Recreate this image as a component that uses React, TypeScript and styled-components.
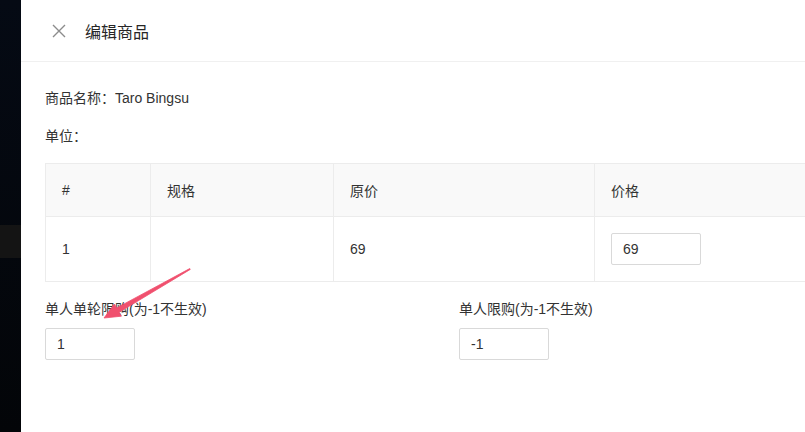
import styled, { createGlobalStyle } from "styled-components";

const GlobalStyle = createGlobalStyle`
  html, body {
    margin: 0;
    padding: 0;
    background: #ffffff;
  }
  body {
    font-family: "Liberation Sans", Arial, "Noto Sans CJK SC", sans-serif;
    color: #333;
    font-size: 14px;
  }
`;

const rows = [{ idx: "1", spec: "", original: "69", price: "69" }];

const App = () => {
  return (
    <>
      <GlobalStyle />
      <Screen>
        <Backdrop>
          <BackdropRow />
        </Backdrop>
        <Drawer>
          <Header>
            <CloseButton aria-label="close">
              <svg width="14" height="14" viewBox="0 0 14 14">
                <path d="M1 1 L13 13 M13 1 L1 13" stroke="#8c8c8c" strokeWidth="1.4" fill="none" />
              </svg>
            </CloseButton>
            <Title>编辑商品</Title>
          </Header>
          <Body>
            <InfoLine>商品名称：Taro Bingsu</InfoLine>
            <InfoLine>单位：</InfoLine>
            <Table>
              <thead>
                <tr>
                  <Th $width={105}>#</Th>
                  <Th $width={183}>规格</Th>
                  <Th $width={261}>原价</Th>
                  <Th>价格</Th>
                </tr>
              </thead>
              <tbody>
                {rows.map((r) => (
                  <tr key={r.idx}>
                    <Td>{r.idx}</Td>
                    <Td>{r.spec}</Td>
                    <Td>{r.original}</Td>
                    <Td>
                      <TextInput defaultValue={r.price} />
                    </Td>
                  </tr>
                ))}
              </tbody>
            </Table>
            <LimitRow>
              <Field>
                <FieldLabel>单人单轮限购(为-1不生效)</FieldLabel>
                <TextInput defaultValue="1" />
              </Field>
              <Field>
                <FieldLabel>单人限购(为-1不生效)</FieldLabel>
                <TextInput defaultValue="-1" />
              </Field>
            </LimitRow>
          </Body>
          {/* tapered annotation arrow */}
          <Pointer width="120" height="60" viewBox="0 0 120 60">
            <path
              d="M109.75 2.57 L36.7 41.9 L34.4 38 L24 52 L41.4 50.2 L39.1 46.3 L110.25 3.43 Z"
              fill="#f0506e"
              stroke="#f0506e"
              strokeWidth="0.8"
              strokeLinejoin="round"
            />
          </Pointer>
        </Drawer>
      </Screen>
    </>
  );
};
export default App;

const Screen = styled.div`
  display: flex;
  width: 805px;
  height: 432px;
  overflow: hidden;
`;

const Backdrop = styled.div`
  width: 21px;
  flex-shrink: 0;
  background: linear-gradient(#050a14, #030508);
  padding-top: 225px;
  box-sizing: border-box;
`;

const BackdropRow = styled.div`
  height: 33px;
  background: #141414;
`;

const Drawer = styled.div`
  position: relative;
  flex: 1;
  background: #fff;
`;

const Header = styled.div`
  display: flex;
  align-items: center;
  height: 62px;
  padding-left: 31px;
  border-bottom: 1px solid #f0f0f0;
  box-sizing: border-box;
`;

const CloseButton = styled.span`
  display: flex;
  width: 14px;
  height: 14px;
  margin-right: 19px;
  cursor: pointer;
`;

const Title = styled.div`
  font-size: 16px;
  color: #262626;
`;

const Body = styled.div`
  padding: 25px 0 0 24px;
`;

const InfoLine = styled.div`
  font-size: 14px;
  line-height: 22px;
  color: #333;
  margin-bottom: 16px;
`;

const Table = styled.table`
  border-collapse: collapse;
  width: 800px;
  margin-top: 4px;
  table-layout: fixed;
`;

const Th = styled.th<{ $width?: number }>`
  width: ${(p) => (p.$width ? `${p.$width}px` : "auto")};
  height: 53px;
  padding: 0 16px;
  text-align: left;
  font-weight: normal;
  font-size: 14px;
  color: #333;
  background: #f9f9f9;
  border: 1px solid #ececec;
  box-sizing: border-box;
`;

const Td = styled.td`
  height: 65px;
  padding: 0 16px;
  font-size: 14px;
  color: #333;
  border: 1px solid #ececec;
  box-sizing: border-box;
`;

const TextInput = styled.input`
  width: 90px;
  height: 32px;
  padding: 0 11px;
  border: 1px solid #d9d9d9;
  border-radius: 2px;
  font-family: inherit;
  font-size: 14px;
  color: #333;
  box-sizing: border-box;
  outline: none;
`;

const LimitRow = styled.div`
  display: flex;
  padding-top: 16px;
`;

const Field = styled.div`
  display: flex;
  flex-direction: column;
  gap: 8px;
  width: 414px;
`;

const FieldLabel = styled.div`
  font-size: 14px;
  line-height: 22px;
  color: #333;
`;

const Pointer = styled.svg`
  position: absolute;
  left: 59px;
  top: 266px;
  pointer-events: none;
`;
